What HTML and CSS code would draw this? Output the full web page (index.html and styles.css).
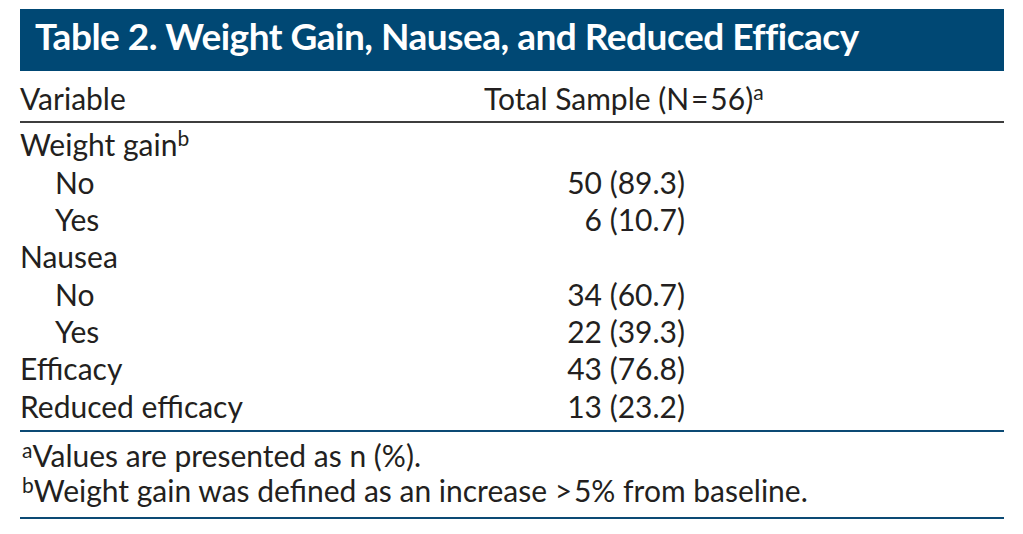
FILE: index.html
```html
<!DOCTYPE html>
<html lang="en">
<head>
<meta charset="utf-8">
<title>Table 2</title>
<link rel="stylesheet" href="styles.css">
</head>
<body>
<div class="wrap">
  <div class="title"><span class="title-text">Table 2. Weight Gain, Nausea, and Reduced Efficacy</span></div>
  <table class="data">
    <colgroup>
      <col class="col-var">
      <col class="col-val">
    </colgroup>
    <thead>
      <tr>
        <th class="c-var">Variable</th>
        <th class="c-val">Total Sample (N&#8202;=&#8202;56)<sup>a</sup></th>
      </tr>
    </thead>
    <tbody>
      <tr class="first"><td class="c-var">Weight gain<sup>b</sup></td><td class="c-val"></td></tr>
      <tr><td class="c-var sub">No</td><td class="c-val">50 (89.3)</td></tr>
      <tr><td class="c-var sub">Yes</td><td class="c-val">6 (10.7)</td></tr>
      <tr><td class="c-var">Nausea</td><td class="c-val"></td></tr>
      <tr><td class="c-var sub">No</td><td class="c-val">34 (60.7)</td></tr>
      <tr><td class="c-var sub">Yes</td><td class="c-val">22 (39.3)</td></tr>
      <tr><td class="c-var">Efficacy</td><td class="c-val">43 (76.8)</td></tr>
      <tr class="last"><td class="c-var">Reduced efficacy</td><td class="c-val">13 (23.2)</td></tr>
    </tbody>
  </table>
  <div class="notes">
    <p class="note"><sup>a</sup>Values are presented as n (%).</p>
    <p class="note"><sup>b</sup>Weight gain was defined as an increase &gt;&#8202;5% from baseline.</p>
  </div>
</div>
</body>
</html>
```
FILE: styles.css
```css
html, body {
  margin: 0;
  padding: 0;
  background: #ffffff;
}

body {
  font-family: "Lato", "Open Sans", sans-serif;
  color: #231f20;
}

.wrap {
  margin: 9px 0 0 20px;
  width: 984px;
}

.title {
  height: 62px;
  box-sizing: border-box;
  background: #004874;
  color: #ffffff;
  padding: 0 0 8px 15px;
}

.title-text {
  font-weight: 700;
  font-size: 37px;
  line-height: 54px;
  letter-spacing: -0.5px;
  white-space: nowrap;
}

.data {
  width: 984px;
  table-layout: fixed;
  border-collapse: collapse;
  margin-top: 9px;
  font-size: 30px;
  line-height: 37.33px;
}

.col-var {
  width: 464px;
}

.data th,
.data td {
  padding: 0;
  font-weight: 400;
  white-space: nowrap;
}

.data thead th {
  text-align: left;
  padding-bottom: 4px;
  border-bottom: 2px solid #3d3d3d;
}

.c-var {
  padding-left: 2px;
}

.data thead .c-val {
  padding-left: 0;
}

.data tbody .c-val {
  text-align: right;
  padding-right: 319px;
}

.data .sub {
  padding-left: 35px;
}

.data tr.first td {
  padding-top: 3px;
}

.data tr.last td {
  padding-bottom: 5px;
  border-bottom: 2px solid #0c4a74;
}

sup {
  font-size: 0.7em;
  line-height: 0;
  vertical-align: 0.5em;
}

.notes {
  padding: 6px 0 9px 2px;
  border-bottom: 2px solid #0c4a74;
}

.note {
  margin: 0;
  font-size: 30px;
  line-height: 35px;
}

.note sup {
  vertical-align: 0.42em;
}
```
